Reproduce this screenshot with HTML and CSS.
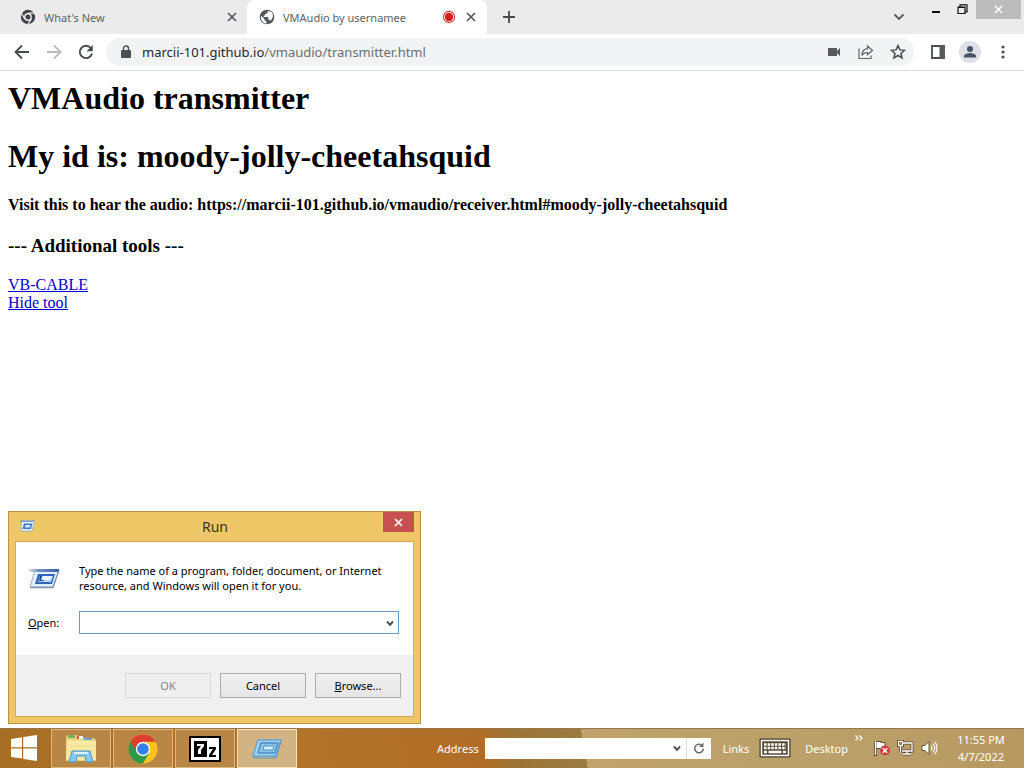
FILE: index.html
```html
<!DOCTYPE html>
<html lang="en">
<head>
<meta charset="utf-8">
<title>VMAudio by usernamee</title>
<link rel="stylesheet" href="styles.css">
</head>
<body>
<header class="browser">
  <div class="tabstrip">
    <div class="tab">
      <svg class="icon" width="16" height="16" viewBox="0 0 16 16"><circle cx="8" cy="8" r="7.2" fill="#3f4246"/><circle cx="8" cy="8" r="3.2" fill="#3f4246" stroke="#ececec" stroke-width="1.4"/><path d="M8 4.2h7M4.7 9.9L1.3 4M11.3 9.9L7.8 15.6" stroke="#ececec" stroke-width="1.2"/></svg>
      <span class="tab-title">What's New</span>
      <button class="plain" aria-label="Close tab"><svg width="10" height="10" viewBox="0 0 10 10"><path d="M1 1l8 8M9 1L1 9" stroke="#55585c" stroke-width="1.7"/></svg></button>
    </div>
    <div class="tab tab-active">
      <svg class="icon" width="16" height="16" viewBox="0 0 24 24"><circle cx="12" cy="12" r="11" fill="#55585c"/><path d="M3 10l5 4.500v2l3 2v3.500A9 9 0 0 1 3 12zM13 3v2c0 1-1 2-2 2H9v2c0 1-1 1-2 1v2h6c1 0 1 1 1 1v3h1c1 0 2 1 2 1.500a9 9 0 0 0 2-13z" fill="#fff"/></svg>
      <span class="tab-title">VMAudio by usernamee</span>
      <svg class="record" width="14" height="14" viewBox="0 0 14 14"><circle cx="7" cy="7" r="5.600" fill="none" stroke="#d23b33" stroke-width="1.1"/><circle cx="7" cy="7" r="4.200" fill="#d0211b"/></svg>
      <button class="plain" aria-label="Close tab"><svg width="10" height="10" viewBox="0 0 10 10"><path d="M1 1l8 8M9 1L1 9" stroke="#55585c" stroke-width="1.7"/></svg></button>
    </div>
    <button class="plain new-tab" aria-label="New tab"><svg width="14" height="14" viewBox="0 0 14 14"><path d="M7 1v12M1 7h12" stroke="#46494d" stroke-width="1.8"/></svg></button>
    <div class="window-controls">
      <button class="plain tab-search" aria-label="Search tabs"><svg width="12" height="8" viewBox="0 0 12 8"><path d="M1.500 1.500L6 6l4.500-4.500" fill="none" stroke="#55585c" stroke-width="1.8"/></svg></button>
      <button class="plain control" aria-label="Minimize"><svg width="10" height="10" viewBox="0 0 10 10"><path d="M1 7h8" stroke="#111" stroke-width="2"/></svg></button>
      <button class="plain control" aria-label="Restore"><svg width="11" height="11" viewBox="0 0 11 11"><path d="M1 3.500h7v6H1zM0.500 3h8M3 3V.8h7v7H8" fill="none" stroke="#111" stroke-width="1.2"/></svg></button>
      <button class="plain control-close" aria-label="Close"><svg width="9" height="9" viewBox="0 0 9 9"><path d="M1 1l7 7M8 1L1 8" stroke="#fff" stroke-width="1.7"/></svg></button>
    </div>
  </div>
  <div class="toolbar">
    <button class="plain" aria-label="Back"><svg width="16" height="16" viewBox="0 0 16 16"><path d="M15 8H2M8 1.500L1.500 8 8 14.500" fill="none" stroke="#46494d" stroke-width="1.8"/></svg></button>
    <button class="plain" aria-label="Forward"><svg width="16" height="16" viewBox="0 0 16 16"><path d="M1 8h13M8 1.500L14.500 8 8 14.500" fill="none" stroke="#babcbe" stroke-width="1.8"/></svg></button>
    <button class="plain" aria-label="Reload"><svg width="16" height="16" viewBox="0 0 16 16"><path d="M12.800 4A6.200 6.200 0 1 0 14 9.500" fill="none" stroke="#46494d" stroke-width="1.9"/><path d="M14.800 1v6.200H8.600z" fill="#46494d"/></svg></button>
    <div class="omnibox">
      <svg class="icon" width="12" height="14" viewBox="0 0 12 14"><path d="M2 5h8q1 0 1 1v6q0 1-1 1H2q-1 0-1-1V6q0-1 1-1z" fill="#4c4f54"/><path d="M3.500 5.500V3.500a2.500 2.500 0 0 1 5 0v2" fill="none" stroke="#4c4f54" stroke-width="1.4"/></svg>
      <span class="url"><span class="host">marcii-101.github.io</span>/vmaudio/transmitter.html</span>
      <button class="plain" aria-label="Camera"><svg width="16" height="16" viewBox="0 0 16 16"><path d="M2 4h9v3l3-3v8l-3-3v3H2z" fill="#55585c"/></svg></button>
      <button class="plain" aria-label="Share"><svg width="16" height="16" viewBox="0 0 16 16"><path d="M1 4.500v10h12V11.500M9.500 2l5 4.500-5 4.300V8.500C7 8.500 5 9.500 3.800 11.500 4 8 6 5 9.500 4.700z" fill="none" stroke="#5f6368" stroke-width="1.2"/></svg></button>
      <button class="plain" aria-label="Bookmark"><svg width="16" height="16" viewBox="0 0 16 16"><path d="M8 1.600l1.900 4.300 4.700.4-3.600 3.100 1.100 4.600L8 11.500l-4.100 2.500L5 9.400 1.400 6.300l4.700-.4z" fill="none" stroke="#4c4f54" stroke-width="1.5"/></svg></button>
    </div>
    <button class="plain panel" aria-label="Side panel"><svg width="16" height="16" viewBox="0 0 16 16"><path d="M2 2h12v12H2z" fill="none" stroke="#4c4f54" stroke-width="1.8"/><path d="M9.500 1.500H14v13H9.500z" fill="#55585c"/></svg></button>
    <button class="plain" aria-label="Profile"><svg width="22" height="22" viewBox="0 0 22 22"><circle cx="11" cy="11" r="11" fill="#dde0e6"/><circle cx="11" cy="8" r="3" fill="#465266"/><path d="M5 16.500v-1.500c0-2 4-3 6-3s6 1 6 3v1.500z" fill="#465266"/></svg></button>
    <button class="plain menu" aria-label="Menu"><svg width="6" height="16" viewBox="0 0 6 16"><g fill="#4c4f54"><circle cx="3" cy="3" r="1.600"/><circle cx="3" cy="8" r="1.600"/><circle cx="3" cy="13" r="1.600"/></g></svg></button>
  </div>
</header>

<main class="page">
  <h1>VMAudio transmitter</h1>
  <h1>My id is: moody-jolly-cheetahsquid</h1>
  <h4>Visit this to hear the audio: https://marcii-101.github.io/vmaudio/receiver.html#moody-jolly-cheetahsquid</h4>
  <h3>--- Additional tools ---</h3>
  <a href="#cable">VB-CABLE</a><br>
  <a href="#hide">Hide tool</a>
</main>

<section class="dialog" role="dialog" aria-labelledby="run-title">
  <div class="dialog-bar">
    <svg class="dialog-mark" width="16" height="12" viewBox="0 0 32 24"><path d="M5 2h26l-5 20H4z" fill="#e4f1fb" stroke="#8fabcd" stroke-width="1.500"/><path d="M1 1h30l-1 3H2z" fill="#7c9fce"/><path d="M10 7h17l-3 11H7z" fill="#3c78cf"/><path d="M13 10h10l-1 5H12z" fill="#d4e8fb"/></svg>
    <h2 class="dialog-title" id="run-title">Run</h2>
    <button class="dialog-close" aria-label="Close"><svg width="9" height="9" viewBox="0 0 9 9"><path d="M1 1l7 7M8 1L1 8" stroke="#fff" stroke-width="1.700"/></svg></button>
  </div>
  <div class="dialog-body">
    <div class="dialog-content">
      <svg width="32" height="24" viewBox="0 0 32 24"><defs><linearGradient id="bar" x1="0" x2="1"><stop stop-color="#dfe9f4"/><stop offset=".35" stop-color="#6f90c0"/><stop offset="1" stop-color="#345fa6"/></linearGradient></defs><path d="M7 4h24l-6 17H2z" fill="#e3f0fa" stroke="#9fb3cd" stroke-width="1"/><path d="M2 21.500h23L31 4" fill="none" stroke="#8295ae" stroke-width="1.300"/><path d="M0 3h31l-1 3H2z" fill="url(#bar)"/><path d="M10 8h17l-3 10H7z" fill="#2f66c0"/><path d="M12 10h13l-2 6H10z" fill="#bfdcf8"/><path d="M15 10h9l-2 4h-8z" fill="#eff8ff"/><path d="M12 10h2l-1 4h3v1h-5z" fill="#17479b"/></svg>
      <p>Type the name of a program, folder, document, or Internet resource, and Windows will open it for you.</p>
      <label for="open"><u>O</u>pen:</label>
      <div class="combo">
        <select id="open"><option></option></select>
        <svg class="chevron" width="8" height="7" viewBox="0 0 8 7"><path d="M1 1.500l3 3.300 3-3.300" fill="none" stroke="#4d4d4d" stroke-width="1.900"/></svg>
      </div>
    </div>
    <div class="dialog-actions">
      <button disabled>OK</button>
      <button>Cancel</button>
      <button><u>B</u>rowse...</button>
    </div>
  </div>
</section>

<footer class="taskbar">
  <button class="start" aria-label="Start"><svg width="28" height="26" viewBox="0 0 28 26"><path d="M1 4l11-1.700v10H1zM13.200 2L27 0v12.300H13.200zM1 13.500h11v10L1 22zM13.200 13.500H27V26l-13.800-2z" fill="#fff"/></svg></button>
  <div class="apps">
    <button class="app" aria-label="File Explorer"><svg width="34" height="32" viewBox="0 0 34 32"><path d="M2 4l1-2h10l2 3h15l2 2v21H2z" fill="#e9cf73"/><path d="M3 7l29 1v19H2z" fill="#f8e9a5"/><path d="M4 2h7v3H4z" fill="#71b36d"/><path d="M13 3h6v3h-6z" fill="#f4f5f5"/><path d="M13 3h2v3h-2z" fill="#cf6043"/><path d="M20 5h8v2h-8z" fill="#6aa6cf"/><path d="M2 13h30M2 18h30" stroke="#f1dc89"/><path d="M5 29l3-11h18l3 11h-7l-1-6h-8l-1 6z" fill="#87c9ed" stroke="#4c9acb"/><path d="M10 20h14" stroke="#d9f3ff" stroke-width="2"/></svg></button>
    <button class="app" aria-label="Chrome"><svg width="30" height="30" viewBox="0 0 30 30"><circle cx="15" cy="15" r="14.500" fill="#fcc31e"/><path d="M15 15L2.400 7.700A14.500 14.500 0 0 1 27.600 7.700H15z" fill="#df3d30"/><path d="M15 15L2.400 7.700A14.500 14.500 0 0 0 15 29.500l6.300-11z" fill="#2e9b4b"/><path d="M2.400 7.700L8.700 18.600 15 15V8z" fill="#2e9b4b"/><path d="M2.400 7.700l5 8A8 8 0 0 1 15 7.700z" fill="#df3d30"/><circle cx="15" cy="15" r="7.200" fill="#fff"/><circle cx="15" cy="15" r="5.800" fill="#347fea"/></svg></button>
    <button class="app" aria-label="7-Zip"><svg width="32" height="26" viewBox="0 0 32 26"><path d="M1 1h30v24H1z" fill="#fff" stroke="#000" stroke-width="2"/><path d="M5 5h13v16H5z" fill="#000"/><path d="M8 8h7v2l-3 4v4h-3v-4l3-4H8z" fill="#fff"/><path d="M20 11h7v2l-4 6h4v2h-7v-2l4-6h-4z" fill="#000"/></svg></button>
    <button class="app app-active" aria-label="Run"><svg width="30" height="22" viewBox="0 0 30 22"><path d="M6 2h23l-5 16H1z" fill="#a9d3ec" stroke="#66a7d2" stroke-width="1.500"/><path d="M1 18l1 2h22l5-17" fill="none" stroke="#579bcb"/><path d="M9 5h17l-3 10H6z" fill="#8bc5e8" stroke="#438fca" stroke-width="1.500"/><path d="M12 8h10l-1 4H11z" fill="#d9effa" stroke="#4d91c5"/></svg></button>
  </div>
  <div class="tray">
    <label for="address">Address</label>
    <div class="address">
      <input id="address" type="text">
      <button aria-label="Previous locations"><svg width="8" height="7" viewBox="0 0 8 7"><path d="M1 1.500l3 3.300 3-3.300" fill="none" stroke="#4d4d4d" stroke-width="1.900"/></svg></button>
      <button class="refresh" aria-label="Refresh"><svg width="12" height="12" viewBox="0 0 12 12"><path d="M8.500 3A4.300 4.300 0 1 0 10.300 6.500" fill="none" stroke="#686868" stroke-width="1.500"/><path d="M10.500 .5V5H6z" fill="#686868"/></svg></button>
    </div>
    <span class="links">Links</span>
    <button class="plain" aria-label="Touch keyboard"><svg width="32" height="20" viewBox="0 0 32 20"><path d="M1 1h30v18H1z" fill="#5c4c31" stroke="#3f382b"/><path d="M2.500 2.500h27v15h-27z" fill="#594b34" stroke="#fff" stroke-width="1.500"/><path d="M5 6.500h22M5 10h22" stroke="#fff" stroke-width="2.400" stroke-dasharray="2.600 1"/><path d="M5 14h3M9.500 14h13M24 14h3" stroke="#fff" stroke-width="2.400"/></svg></button>
    <span class="desktop">Desktop</span>
    <svg class="more" width="8" height="6" viewBox="0 0 8 6"><path d="M.5.5L3 3 .5 5.500M4.500.5L7 3 4.500 5.500" fill="none" stroke="#fff" stroke-width="1.200"/></svg>
    <div class="status">
      <svg width="16" height="16" viewBox="0 0 16 16"><path d="M1.500 1v15" stroke="#5a4a32" stroke-width="3"/><path d="M2 1.500h5v1h4v7H6v-1H2z" fill="#fff" stroke="#5a4a32"/><path d="M1.500 1v14" stroke="#fff" stroke-width="1.300"/><circle cx="11" cy="10.500" r="5" fill="#d83d3b"/><path d="M8.800 8.300l4.400 4.400M13.200 8.300l-4.400 4.400" stroke="#fff" stroke-width="1.500"/></svg>
      <svg width="17" height="16" viewBox="0 0 17 16"><g fill="none" stroke="#594a32" stroke-width="3"><path d="M6 3h9v8H5M10 11v3M6 14h8M1.500 1.500h4v4h-4zM3.500 6v7"/></g><g fill="none" stroke="#fff" stroke-width="1.300"><path d="M6 3h9v8H5M10 11v3M6 14h8M1.500 1.500h4v4h-4zM3.500 6v7"/></g></svg>
      <svg width="17" height="16" viewBox="0 0 17 16"><path d="M1 5.500h3l4-4v13l-4-4H1z" fill="#fff" stroke="#65563b"/><path d="M10 5.500q2 2.500 0 5M12 3.500q3.500 4.500 0 9M14 1.800q4 6 0 12.400" fill="none" stroke="#fff" stroke-width="1.100"/></svg>
    </div>
    <time class="clock"><span>11:55 PM</span><span>4/7/2022</span></time>
  </div>
</footer>
</body>
</html>
```
FILE: styles.css
```css
* { box-sizing: border-box; }
body {
  margin: 0;
  min-height: 100vh;
  display: flex;
  flex-direction: column;
  background: #fff;
  font-family: "Noto Sans", "Open Sans", sans-serif;
  font-size: 11px;
}
button, input, select { font: inherit; }
svg { display: block; flex-shrink: 0; }
.plain {
  display: flex;
  align-items: center;
  justify-content: center;
  padding: 0;
  border: 0;
  background: none;
}

/* Browser chrome */
.browser { border-bottom: 1px solid #dcddde; }
.tabstrip { display: flex; height: 34px; background: #ebebeb; }
.tab {
  display: flex;
  align-items: center;
  gap: 8px;
  width: 247px;
  padding: 0 10px 0 20px;
  color: #606266;
}
.tab-active {
  width: 240px;
  padding: 0 11px 0 12px;
  border-radius: 8px 8px 0 0;
  background: #fff;
}
.tab-title { flex: 1; white-space: nowrap; }
.record { margin-right: 2px; }
.new-tab { width: 44px; }
.window-controls { display: flex; align-items: flex-start; margin-left: auto; }
.tab-search { width: 24px; height: 34px; margin-right: 12px; }
.control { width: 26px; height: 19px; }
.control-close { width: 45px; height: 19px; margin: 0 3px 0 1px; background: #bcbcbc; }
.toolbar {
  display: flex;
  align-items: center;
  gap: 16px;
  height: 36px;
  padding: 0 15px 0 14px;
}
.omnibox {
  display: flex;
  flex: 1;
  align-items: center;
  gap: 16px;
  height: 28px;
  margin-left: -4px;
  padding: 0 8px 0 14px;
  border-radius: 14px;
  background: #f1f3f4;
}
.url { flex: 1; margin-left: -6px; font-size: 13px; color: #6b6f75; white-space: nowrap; }
.host { color: #25282d; }
.panel { margin-right: -3px; }
.menu { width: 12px; }

/* Web page */
.page {
  flex: 1;
  padding: 9px 8px;
  font-family: "Liberation Serif", serif;
  font-size: 16px;
  line-height: 18px;
  color: #000;
}
.page h1 { margin: 0 0 21px; font-size: 32px; line-height: 37px; }
.page h4 { margin: 0 0 21px; font-size: 16px; }
.page h3 { margin: 0 0 19px; font-size: 19px; line-height: 22px; }
.page a { color: #0000ce; }

/* Run dialog */
.dialog {
  position: absolute;
  left: 8px;
  bottom: 44px;
  width: 413px;
  padding: 0 6px 6px;
  border: 1px solid #bc9144;
  background: #eec767;
}
.dialog-bar { display: flex; align-items: flex-start; justify-content: space-between; height: 29px; }
.dialog-mark { margin: 8px 12px 0 4px; }
.dialog-title { margin: 5px 0 0; font-size: 14px; line-height: 20px; font-weight: 400; color: #3c3220; }
.dialog-close {
  display: flex;
  align-items: center;
  justify-content: center;
  width: 31px;
  height: 20px;
  padding: 0;
  border: 0;
  background: #c75050;
}
.dialog-body { border: 1px solid #d5a950; background: #f0f0f0; }
.dialog-content {
  display: grid;
  grid-template-columns: 32px 1fr;
  column-gap: 19px;
  row-gap: 18px;
  align-items: center;
  padding: 21px 14px 21px 12px;
  background: #fff;
}
.dialog-content p { margin: 0; line-height: 15px; }
.combo { position: relative; }
.combo select {
  display: block;
  width: 100%;
  height: 23px;
  border: 1px solid #6c9bc4;
  border-radius: 0;
  background: #fff;
  appearance: none;
}
.combo .chevron { position: absolute; right: 5px; top: 9px; pointer-events: none; }
.dialog-actions { display: flex; justify-content: flex-end; gap: 9px; padding: 18px 12px; }
.dialog-actions button {
  width: 86px;
  height: 25px;
  padding: 0;
  border: 1px solid #acacac;
  background: linear-gradient(#f0f0f0, #e5e5e5);
  color: #000;
}
.dialog-actions button:disabled { border-color: #d9d9d9; background: #efefef; color: #838383; }

/* Taskbar */
.taskbar {
  display: flex;
  align-items: center;
  height: 40px;
  color: #fff;
  background:
    linear-gradient(#9a7548 0 1px, transparent 1px),
    linear-gradient(80deg, #a66e24 0, #b37329 30%, #b06d27 47%, #9c7434 50%, #9a7c43 57%, #bfa26c 57%, #bba06a 80%, #b89861 100%);
}
.start { width: 51px; height: 40px; padding: 0 10px; border: 0; background: none; }
.apps { display: flex; gap: 2px; height: 40px; padding-top: 1px; }
.app {
  display: flex;
  align-items: center;
  justify-content: center;
  width: 60px;
  padding: 0;
  border: 1px solid #dfb87c;
  background: #b98646;
}
.app-active { border-color: #f7e5b8; background: #d2b384; }
.tray { display: flex; align-items: center; margin-left: auto; }
.address { display: flex; width: 226px; height: 21px; margin-left: 6px; background: #fff; }
.address input { flex: 1; min-width: 0; padding: 0 4px; border: 0; background: #fff; }
.address button {
  display: flex;
  align-items: center;
  justify-content: center;
  width: 18px;
  padding: 0;
  border: 0;
  background: #fff;
}
.address .refresh { width: 25px; border-left: 1px solid #ddd; }
.links { margin: 0 10px 0 12px; }
.desktop { margin-left: 14px; }
.more { align-self: flex-start; margin: 4px 11px 0 7px; }
.status { display: flex; gap: 7px; }
.clock { display: flex; flex-direction: column; align-items: center; width: 86px; line-height: 17px; }
```
